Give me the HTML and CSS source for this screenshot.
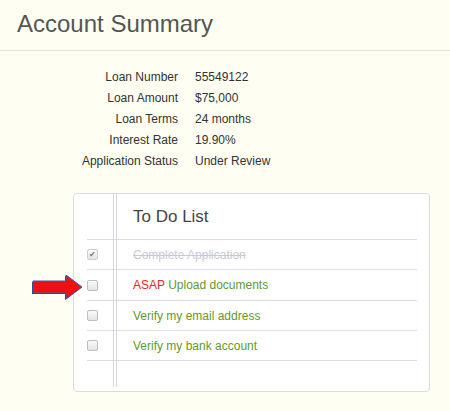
FILE: index.html
```html
<!DOCTYPE html>
<html lang="en">
<head>
    <meta charset="UTF-8">
    <meta name="viewport" content="width=device-width, initial-scale=1.0">
    <title>Account Summary</title>
    <link rel="stylesheet" href="styles.css">
</head>
<body>
    <header class="page-header">
        <h1>Account Summary</h1>
    </header>

    <dl class="summary">
        <dt>Loan Number</dt><dd>55549122</dd>
        <dt>Loan Amount</dt><dd>$75,000</dd>
        <dt>Loan Terms</dt><dd>24 months</dd>
        <dt>Interest Rate</dt><dd>19.90%</dd>
        <dt>Application Status</dt><dd>Under Review</dd>
    </dl>

    <section class="todo">
        <svg class="arrow" width="54" height="28" viewBox="0 0 54 28">
            <polygon points="2,8 35,8 35,2 51,14 35,26 35,20 2,20" fill="#1f3f8f" transform="translate(-1,1)"/>
            <polygon points="2,8 35,8 35,2 51,14 35,26 35,20 2,20" fill="#f01010" stroke="#3a5aa8" stroke-width="1"/>
        </svg>

        <div class="todo-card">
            <h2 class="todo-title">To Do List</h2>
            <ul class="todo-list">
                <li class="todo-item done">
                    <span class="box checked">&#10004;</span>
                    <span class="todo-text">Complete Application</span>
                </li>
                <li class="todo-item">
                    <span class="box"></span>
                    <span class="todo-text"><span class="urgent">ASAP</span> Upload documents</span>
                </li>
                <li class="todo-item">
                    <span class="box"></span>
                    <span class="todo-text">Verify my email address</span>
                </li>
                <li class="todo-item">
                    <span class="box"></span>
                    <span class="todo-text">Verify my bank account</span>
                </li>
            </ul>
        </div>
    </section>
</body>
</html>
```

FILE: styles.css
```css
body {
    font-family: "Liberation Sans", Arial, sans-serif;
    background-color: #fefef2;
    color: #333;
    margin: 0;
    padding: 0;
}

.page-header {
    padding: 10px 17px 12px;
    border-bottom: 1px solid #e2e2dc;
}

.page-header h1 {
    margin: 0;
    font-size: 24px;
    font-weight: normal;
    line-height: 28px;
    color: #555;
}

.summary {
    display: grid;
    grid-template-columns: 178px auto;
    column-gap: 17px;
    margin: 16px 0 21px;
    font-size: 12px;
    line-height: 21px;
    color: #333;
}

.summary dt {
    text-align: right;
}

.summary dd {
    margin: 0;
}

.todo {
    position: relative;
}

.arrow {
    display: block;
    position: absolute;
    z-index: 2;
    left: 31px;
    top: 80px;
}

.todo-card {
    position: relative;
    margin-left: 73px;
    width: 357px;
    padding: 0 12px 30px 13px;
    box-sizing: border-box;
    background-color: #fff;
    border: 1px solid #dadae4;
    border-radius: 4px;
}

.todo-card::before {
    content: "";
    position: absolute;
    top: 0;
    bottom: 4px;
    left: 39px;
    width: 2px;
    border-left: 1px solid #d4d4e6;
    border-right: 1px solid #d4d4e6;
}

.todo-title {
    margin: 0;
    height: 45px;
    padding-left: 46px;
    font-size: 17px;
    font-weight: normal;
    line-height: 45px;
    color: #444;
    border-bottom: 1px solid #dcdce8;
}

.todo-list {
    list-style: none;
    margin: 0;
    padding: 0;
}

.todo-item {
    display: flex;
    align-items: center;
    height: 29px;
    border-bottom: 1px solid #dcdce8;
    font-size: 12px;
    color: #5f9a2c;
}

.todo-item:nth-child(2) {
    height: 30px;
}

.box {
    display: flex;
    align-items: center;
    justify-content: center;
    width: 9px;
    height: 9px;
    margin-right: 35px;
    border: 1px solid #bdbdbd;
    border-radius: 2px;
    background: linear-gradient(#fafafa, #e4e4e4);
    font-size: 8px;
    line-height: 1;
    color: #777;
}

.box.checked {
    border-color: #cfcfcf;
}

.done .todo-text {
    color: #c6cad6;
    text-decoration: line-through;
}

.urgent {
    color: #f5222d;
}
```
